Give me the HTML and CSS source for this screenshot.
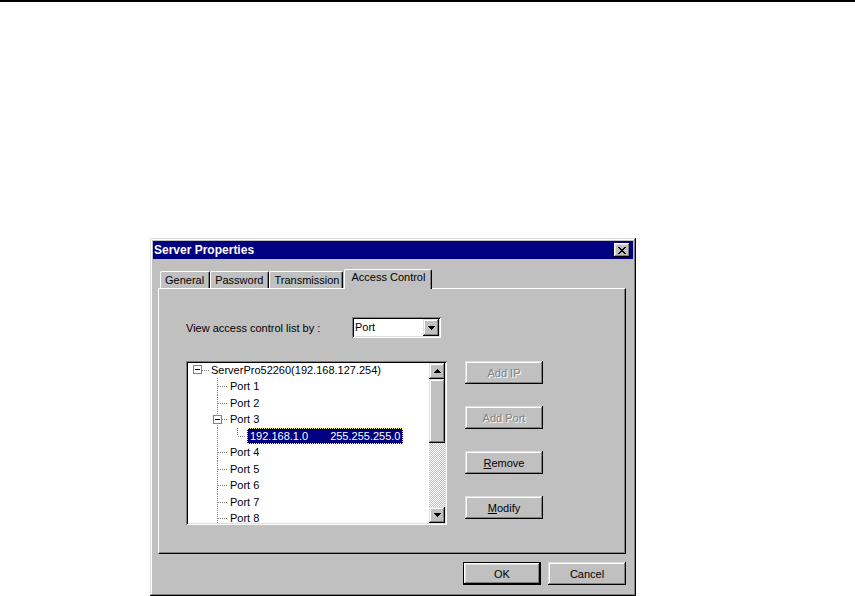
FILE: index.html
```html
<!DOCTYPE html>
<html>
<head>
    <link rel="stylesheet" href="styles.css">
</head>
<body>
    <div class="rule"></div>
    <div class="dialog">
        <div class="titlebar">
            <span class="title">Server Properties</span>
            <button class="close">
                <svg width="8" height="7" viewBox="0 0 8 7" shape-rendering="crispEdges"><path d="M0 0h2v1H0zM6 0h2v1H6zM1 1h2v1H1zM5 1h2v1H5zM2 2h4v1H2zM3 3h2v1H3zM2 4h4v1H2zM1 5h2v1H1zM5 5h2v1H5zM0 6h2v1H0zM6 6h2v1H6z"/></svg>
            </button>
        </div>
        <div class="dialog-body">
            <div class="tabs">
                <div class="tab">General</div>
                <div class="tab">Password</div>
                <div class="tab tight">Transmission</div>
                <div class="tab active">Access Control</div>
            </div>
            <div class="panel">
                <div class="view-row">
                    <span class="view-label">View access control list by :</span>
                    <div class="combo">
                        <span class="combo-text">Port</span>
                        <span class="combo-btn">
                            <svg width="7" height="4" viewBox="0 0 7 4" shape-rendering="crispEdges"><path d="M0 0h7v1H0zM1 1h5v1H1zM2 2h3v1H2zM3 3h1v1H3z"/></svg>
                        </span>
                    </div>
                </div>
                <div class="acl-row">
                    <div class="tree">
                        <div class="tree-list">
                            <div class="node root"><span class="exp"></span><span class="node-label">ServerPro52260(192.168.127.254)</span></div>
                            <div class="node leaf"><span class="node-label">Port 1</span></div>
                            <div class="node leaf"><span class="node-label">Port 2</span></div>
                            <div class="node branch"><span class="exp"></span><span class="node-label">Port 3</span></div>
                            <div class="node child"><span class="node-label selected"><span>192.168.1.0</span><span class="mask">255.255.255.0</span></span></div>
                            <div class="node leaf"><span class="node-label">Port 4</span></div>
                            <div class="node leaf"><span class="node-label">Port 5</span></div>
                            <div class="node leaf"><span class="node-label">Port 6</span></div>
                            <div class="node leaf"><span class="node-label">Port 7</span></div>
                            <div class="node leaf"><span class="node-label">Port 8</span></div>
                        </div>
                        <div class="vscroll">
                            <span class="sb-btn">
                                <svg width="7" height="4" viewBox="0 0 7 4" shape-rendering="crispEdges"><path d="M3 0h1v1H3zM2 1h3v1H2zM1 2h5v1H1zM0 3h7v1H0z"/></svg>
                            </span>
                            <span class="sb-thumb"></span>
                            <span class="sb-track"></span>
                            <span class="sb-btn">
                                <svg width="7" height="4" viewBox="0 0 7 4" shape-rendering="crispEdges"><path d="M0 0h7v1H0zM1 1h5v1H1zM2 2h3v1H2zM3 3h1v1H3z"/></svg>
                            </span>
                        </div>
                    </div>
                    <div class="acl-buttons">
                        <button class="btn" disabled>Add IP</button>
                        <button class="btn" disabled>Add Port</button>
                        <button class="btn"><u>R</u>emove</button>
                        <button class="btn"><u>M</u>odify</button>
                    </div>
                </div>
            </div>
            <div class="dialog-buttons">
                <button class="btn default">OK</button>
                <button class="btn">Cancel</button>
            </div>
        </div>
    </div>
</body>
</html>
```

FILE: styles.css
```css
* {
    box-sizing: border-box;
}
body {
    margin: 0;
    background-color: #fff;
    color: #000;
    font-family: "Liberation Sans", Arial, sans-serif;
    font-size: 11px;
    --hdots: repeating-linear-gradient(to right, #808080 0 1px, transparent 1px 2px);
    --vdots: repeating-linear-gradient(to bottom, #808080 0 1px, transparent 1px 2px);
}
.rule {
    height: 2px;
    background-color: #000;
}
.dialog {
    width: 486px;
    height: 358px;
    margin: 236px 0 0 150px;
    padding: 3px;
    background-color: #c0c0c0;
    box-shadow: inset -1px -1px #000, inset 1px 1px #dfdfdf, inset -2px -2px #808080, inset 2px 2px #fff;
    display: flex;
    flex-direction: column;
}
.titlebar {
    height: 18px;
    background-color: #000080;
    color: #fff;
    display: flex;
    align-items: center;
    padding-left: 1px;
}
.title {
    flex: 1;
    font-weight: bold;
    font-size: 12px;
}
.close {
    width: 16px;
    height: 14px;
    margin-right: 3px;
    padding: 0;
    border: none;
    background-color: #c0c0c0;
    box-shadow: inset -1px -1px #000, inset 1px 1px #fff, inset -2px -2px #808080, inset 2px 2px #dfdfdf;
    display: flex;
    align-items: center;
    justify-content: center;
}

/* raised / sunken bevels */
.combo-btn, .sb-btn, .sb-thumb, .btn {
    background-color: #c0c0c0;
    box-shadow: inset -1px -1px #000, inset 1px 1px #dfdfdf, inset -2px -2px #808080, inset 2px 2px #fff;
}
.combo, .tree {
    background-color: #fff;
    box-shadow: inset 1px 1px #808080, inset -1px -1px #fff, inset 2px 2px #000, inset -2px -2px #dfdfdf;
}

.dialog-body {
    flex: 1;
    padding: 10px 7px 0 5px;
}
.tabs {
    display: flex;
    align-items: flex-end;
    height: 19px;
    padding-left: 2px;
    position: relative;
    z-index: 1;
}
.tab {
    height: 17px;
    padding: 1px 5px 0 4px;
    line-height: 15px;
    background-color: #c0c0c0;
    border-top: 1px solid #fff;
    border-left: 1px solid #fff;
    border-right: 1px solid #000;
    border-radius: 2px 2px 0 0;
    box-shadow: inset -1px 0 #808080;
    white-space: nowrap;
}
.tab.tight {
    padding-right: 3px;
}
.tab.active {
    height: 20px;
    margin: 0 0 -1px 1px;
    padding: 0 6px;
}
.panel {
    height: 266px;
    border-top: 1px solid #fff;
    border-left: 1px solid #fff;
    border-right: 1px solid #000;
    border-bottom: 1px solid #000;
    box-shadow: inset -1px -1px #808080;
    padding: 28px 0 0 27px;
}
.view-row {
    display: flex;
    align-items: center;
    height: 21px;
}
.view-label {
    width: 166px;
}
.combo {
    width: 89px;
    height: 21px;
    padding: 2px;
    display: flex;
}
.combo-text {
    flex: 1;
    padding-left: 1px;
    line-height: 17px;
}
.combo-btn {
    width: 16px;
    height: 17px;
    display: flex;
    align-items: center;
    justify-content: center;
}
.acl-row {
    display: flex;
    gap: 18px;
    margin-top: 23px;
}
.tree {
    width: 261px;
    height: 164px;
    padding: 2px;
    display: flex;
}
.tree-list {
    flex: 1;
    overflow: hidden;
}
.node {
    height: 16.5px;
    display: flex;
    align-items: center;
    white-space: nowrap;
    background-repeat: no-repeat;
}
.node-label {
    padding: 0 2px;
    line-height: 14px;
}
.exp {
    width: 9px;
    height: 9px;
    flex: none;
    border: 1px solid #808080;
    background-color: #fff;
    display: flex;
    align-items: center;
    justify-content: center;
}
.exp::before {
    content: "";
    width: 5px;
    height: 1px;
    background-color: #000;
}
.node.root {
    margin-top: -1.5px;
    padding-left: 5px;
    background-image: var(--hdots);
    background-position: 14px 8px;
    background-size: 7px 1px;
}
.root .node-label {
    margin-left: 7px;
}
.node.leaf {
    padding-left: 40px;
    background-image: var(--hdots), var(--vdots);
    background-position: 30px 8px, 29px 0;
    background-size: 9px 1px, 1px 100%;
}
.node.branch {
    padding-left: 25px;
    background-image: var(--hdots), var(--vdots);
    background-position: 34px 8px, 29px 0;
    background-size: 6px 1px, 1px 100%;
}
.branch .node-label {
    margin-left: 6px;
}
.node.child {
    padding-left: 59px;
    background-image: var(--hdots), var(--vdots), var(--vdots);
    background-position: 50px 8px, 49px 0, 29px 0;
    background-size: 8px 1px, 1px 8px, 1px 100%;
}
.node-label.selected {
    padding: 1px 3px;
    background-color: #000080;
    color: #fff;
    outline: 1px dotted #ffff80;
    outline-offset: -1px;
}
.selected .mask {
    margin-left: 22px;
}
.vscroll {
    width: 16px;
    display: flex;
    flex-direction: column;
}
.sb-btn {
    height: 16px;
    flex: none;
    display: flex;
    align-items: center;
    justify-content: center;
}
.sb-thumb {
    height: 64px;
    flex: none;
}
.sb-track {
    flex: 1;
    background: repeating-conic-gradient(#c0c0c0 0 25%, #fff 0 50%) 0 0 / 2px 2px;
}
.acl-buttons {
    display: flex;
    flex-direction: column;
    gap: 22px;
}
.btn {
    width: 78px;
    height: 23px;
    padding: 0;
    border: none;
    font-family: "Liberation Sans", Arial, sans-serif;
    font-size: 11px;
    color: #000;
}
.btn:disabled {
    color: #808080;
    text-shadow: 1px 1px #fff;
}
.btn.default {
    box-shadow: inset 0 0 0 1px #000, inset -2px -2px #000, inset 2px 2px #fff, inset -3px -3px #808080, inset 3px 3px #dfdfdf;
}
.dialog-buttons {
    display: flex;
    justify-content: flex-end;
    gap: 7px;
    margin-top: 8px;
}
```
